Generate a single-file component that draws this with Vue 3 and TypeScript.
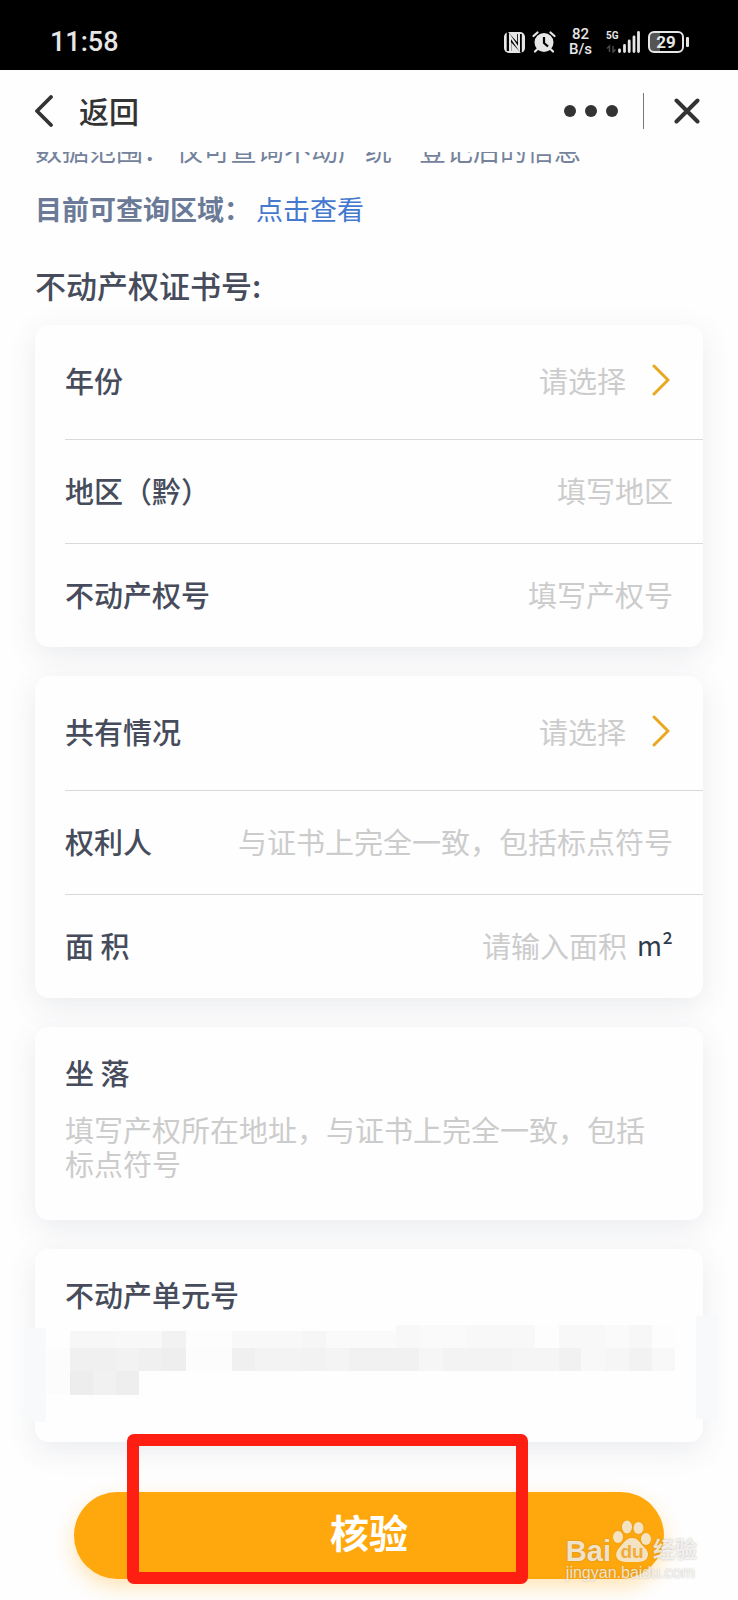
<script setup lang="ts">
import { ref } from 'vue'

interface Field {
  id: string
  label: string
  placeholder: string
  kind: 'select' | 'text'
  unit?: boolean
}

const groups: Field[][] = [
  [
    { id: 'year', label: '年份', placeholder: '请选择', kind: 'select' },
    { id: 'region', label: '地区（黔）', placeholder: '填写地区', kind: 'text' },
    { id: 'cert', label: '不动产权号', placeholder: '填写产权号', kind: 'text' },
  ],
  [
    { id: 'share', label: '共有情况', placeholder: '请选择', kind: 'select' },
    { id: 'owner', label: '权利人', placeholder: '与证书上完全一致，包括标点符号', kind: 'text' },
    { id: 'area', label: '面 积', placeholder: '请输入面积', kind: 'text', unit: true },
  ],
]

const address = ref('')

interface Cell {
  x: number
  y: number
  w: number
  h: number
  c: string
}

const cells: Cell[] = [
  { x: 35, y: 82, w: 46, h: 17, c: '#f7f7f7' },
  { x: 81, y: 82, w: 46, h: 17, c: '#f8f8f8' },
  { x: 127, y: 82, w: 24, h: 17, c: '#f2f2f2' },
  { x: 151, y: 82, w: 46, h: 17, c: '#fdfdfd' },
  { x: 197, y: 82, w: 70, h: 17, c: '#f8f8f8' },
  { x: 267, y: 82, w: 24, h: 17, c: '#f6f6f6' },
  { x: 291, y: 82, w: 70, h: 17, c: '#fafafa' },
  { x: 361, y: 76, w: 24, h: 23, c: '#f8f8f8' },
  { x: 385, y: 76, w: 46, h: 23, c: '#fafafa' },
  { x: 431, y: 76, w: 69, h: 23, c: '#f8f8f8' },
  { x: 500, y: 76, w: 24, h: 23, c: '#fdfdfd' },
  { x: 524, y: 76, w: 46, h: 23, c: '#f8f8f8' },
  { x: 570, y: 76, w: 24, h: 23, c: '#fafafa' },
  { x: 594, y: 76, w: 23, h: 23, c: '#f7f7f7' },
  { x: 617, y: 76, w: 23, h: 23, c: '#fdfdfd' },
  { x: 12, y: 99, w: 23, h: 46, c: '#fcfcfc' },
  { x: 35, y: 99, w: 46, h: 23, c: '#f0f0f0' },
  { x: 81, y: 99, w: 23, h: 23, c: '#f2f2f2' },
  { x: 104, y: 99, w: 23, h: 23, c: '#f0f0f0' },
  { x: 127, y: 99, w: 24, h: 23, c: '#eeeeee' },
  { x: 151, y: 99, w: 46, h: 23, c: '#fcfcfc' },
  { x: 197, y: 99, w: 23, h: 23, c: '#f0f0f0' },
  { x: 220, y: 99, w: 47, h: 23, c: '#f3f3f3' },
  { x: 267, y: 99, w: 24, h: 23, c: '#f2f2f2' },
  { x: 291, y: 99, w: 23, h: 23, c: '#f4f4f4' },
  { x: 314, y: 99, w: 70, h: 23, c: '#f1f1f1' },
  { x: 384, y: 99, w: 24, h: 23, c: '#f6f6f6' },
  { x: 408, y: 99, w: 69, h: 23, c: '#f3f3f3' },
  { x: 477, y: 99, w: 47, h: 23, c: '#f5f5f5' },
  { x: 524, y: 99, w: 22, h: 23, c: '#f1f1f1' },
  { x: 546, y: 99, w: 24, h: 23, c: '#f8f8f8' },
  { x: 570, y: 99, w: 24, h: 23, c: '#f6f6f6' },
  { x: 594, y: 99, w: 23, h: 23, c: '#f2f2f2' },
  { x: 617, y: 99, w: 23, h: 23, c: '#f8f8f8' },
  { x: 35, y: 122, w: 23, h: 24, c: '#ededed' },
  { x: 58, y: 122, w: 23, h: 24, c: '#f1f1f1' },
  { x: 81, y: 122, w: 23, h: 24, c: '#eeeeee' },
]
</script>

<template>
  <div class="page">
    <header class="top">
      <div class="status">
        <span class="clock">11:58</span>
        <div class="indicators">
          <svg class="nfc" viewBox="0 0 21 21" width="21" height="21" aria-hidden="true">
            <rect x="0" y="0" width="21" height="21" rx="5" fill="#e6e6e6" />
            <path d="M5 19V4.500L15.500 16V2" fill="none" stroke="#000" stroke-width="4.600" />
            <path d="M6 20V4l9 13V1" fill="none" stroke="#e6e6e6" stroke-width="2" />
          </svg>
          <svg class="alarm" viewBox="0 0 24 22" width="24" height="22" aria-hidden="true">
            <circle cx="12" cy="11.5" r="9.5" fill="#e6e6e6" />
            <path d="M1.5 5 5.5 1.5M22.500 5l-4-3.500M5 18.500l-2 2M19 18.500l2 2" stroke="#e6e6e6" stroke-width="2.200" stroke-linecap="round" />
            <path d="M12 6v6l4 3.500" fill="none" stroke="#000" stroke-width="2.200" />
          </svg>
          <span class="speed"><span>82</span><span>B/s</span></span>
          <span class="network">
            <svg viewBox="0 0 34 22" width="34" height="22" aria-hidden="true">
              <path d="M3.500 21v-6l-2.500 2.500M7 15v6l2.500-2.500" fill="none" stroke="#4a4a4a" stroke-width="1.500" />
              <path d="M13.500 20.500v-1.500M18.500 20.500v-6M23.200 20.500V10M28 20.500V6M32.500 20.500V1.500" stroke="#e6e6e6" stroke-width="2.800" stroke-linecap="round" />
            </svg>
            <span class="gen">5G</span>
          </span>
          <span class="battery"><span class="cell">29</span></span>
        </div>
      </div>
      <nav class="nav">
        <button class="back" type="button">
          <svg viewBox="0 0 20 32" width="20" height="32" aria-hidden="true">
            <path d="M17 2 3 16l14 14" fill="none" stroke="#333" stroke-width="3.800" stroke-linecap="round" stroke-linejoin="round" />
          </svg>
          <span>返回</span>
        </button>
        <div class="tools">
          <button type="button" aria-label="更多">
            <svg viewBox="0 0 54 12" width="54" height="12" aria-hidden="true">
              <circle cx="6" cy="6" r="6" fill="#333" /><circle cx="27" cy="6" r="6" fill="#333" /><circle cx="48" cy="6" r="6" fill="#333" />
            </svg>
          </button>
          <i class="bar"></i>
          <button type="button" aria-label="关闭">
            <svg viewBox="0 0 26 26" width="26" height="26" aria-hidden="true">
              <path d="M2.500 2.500l21 21M23.500 2.500l-21 21" stroke="#333" stroke-width="4" stroke-linecap="round" />
            </svg>
          </button>
        </div>
      </nav>
    </header>

    <main class="content">
      <div class="scrolled"><p>数据范围： 仅可查询不动产统一登记后的信息</p></div>
      <p class="area"><b>目前可查询区域：</b><a href="#">点击查看</a></p>
      <h1>不动产权证书号:</h1>

      <form @submit.prevent>
        <section v-for="(group, g) in groups" :key="g" class="card">
          <div v-for="f in group" :key="f.id" class="row" :class="f.kind">
            <label :for="f.id">{{ f.label }}</label>
            <template v-if="f.kind === 'select'">
              <select :id="f.id"><option value="">{{ f.placeholder }}</option></select>
              <svg class="chev" viewBox="0 0 18 32" width="18" height="32" aria-hidden="true">
                <path d="M2 2 16 16 2 30" fill="none" stroke="#e9a820" stroke-width="3" stroke-linecap="round" stroke-linejoin="round" />
              </svg>
            </template>
            <input v-else :id="f.id" type="text" :placeholder="f.placeholder" />
            <span v-if="f.unit" class="unit">m²</span>
          </div>
        </section>

        <section class="card block">
          <label for="address">坐 落</label>
          <textarea id="address" v-model="address" rows="2" placeholder="填写产权所在地址，与证书上完全一致，包括标点符号"></textarea>
        </section>

        <section class="card block">
          <label for="unit-no">不动产单元号</label>
          <textarea id="unit-no" rows="2"></textarea>
          <svg class="mosaic" viewBox="0 0 668 193" preserveAspectRatio="none" aria-hidden="true">
            <defs>
              <linearGradient id="edge">
                <stop offset="0" stop-color="#f8f9fb" stop-opacity="0" />
                <stop offset="0.5" stop-color="#f8f9fb" />
                <stop offset="1" stop-color="#f8f9fb" />
              </linearGradient>
            </defs>
            <rect x="-14" y="79" width="25" height="94" fill="url(#edge)" />
            <rect x="661" y="67" width="22" height="103" fill="#f8f9fb" />
            <rect v-for="(c, i) in cells" :key="i" :x="c.x" :y="c.y" :width="c.w" :height="c.h" :fill="c.c" />
          </svg>
        </section>

        <div class="action">
          <button class="submit" type="submit">核验</button>
          <div class="frame"></div>
          <div class="mark">
            <div class="brand">
              <span class="latin">Bai</span>
              <svg viewBox="0 0 38 42" width="38" height="42" aria-hidden="true">
                <g class="paw">
                  <ellipse cx="5" cy="17" rx="5" ry="6" />
                  <ellipse cx="14" cy="7" rx="5" ry="6.500" />
                  <ellipse cx="25.500" cy="8" rx="5" ry="6" />
                  <ellipse cx="33" cy="19" rx="5" ry="6" />
                  <path d="M19 18c6 0 8 5 12 9s5 7 3 11-7 4-15 4-13 0-15-4 0-8 3-11 6-9 12-9z" />
                </g>
                <text x="19" y="38" text-anchor="middle">du</text>
              </svg>
              <span class="han">经验</span>
            </div>
            <div class="site">jingyan.baidu.com</div>
          </div>
        </div>
      </form>
    </main>
  </div>
</template>

<style>
body {
  margin: 0;
  background: #fefefe;
}
</style>

<style scoped>
.page {
  font-family: "Noto Sans CJK SC", "Liberation Sans", sans-serif;
  font-size: 29px;
  color: #464c5b;
  overflow: hidden;
}
p, h1 { margin: 0; }
button {
  border: 0;
  padding: 0;
  background: none;
  font: inherit;
  color: inherit;
  display: flex;
  align-items: center;
}
.status {
  height: 70px;
  box-sizing: border-box;
  padding: 14px 49px 0 50px;
  background: #000;
  color: #e6e6e6;
  display: flex;
  align-items: center;
  justify-content: space-between;
  font-family: Roboto, "Noto Sans", sans-serif;
}
.clock { font-size: 27px; line-height: 28px; font-weight: 500; }
.indicators { display: flex; align-items: center; }
.alarm { margin-left: 7px; }
.speed {
  margin-left: 13px;
  display: flex;
  flex-direction: column;
  align-items: center;
  font-size: 15px;
  line-height: 15px;
  font-weight: 500;
}
.speed span { height: 15px; }
.network { margin-left: 14px; position: relative; display: flex; }
.gen {
  position: absolute;
  left: 0;
  top: 0;
  font-size: 10px;
  line-height: 10px;
  font-weight: 700;
}
.battery {
  margin-left: 8px;
  display: flex;
  align-items: center;
}
.battery::after {
  content: "";
  width: 3px;
  height: 10px;
  margin-left: 2px;
  border-radius: 1px;
  background: #e6e6e6;
}
.cell {
  width: 32px;
  height: 18px;
  border: 2px solid #e6e6e6;
  border-radius: 6px;
  background: linear-gradient(90deg, #555 30%, #000 30%);
  font-size: 17px;
  line-height: 18px;
  font-weight: 700;
  text-align: center;
}
.nav {
  height: 82px;
  padding: 0 38px 0 34px;
  display: flex;
  align-items: center;
  justify-content: space-between;
  color: #333;
}
.back { gap: 25px; font-size: 30px; line-height: 40px; font-weight: 500; }
.back span { padding-bottom: 3px; }
.tools { display: flex; align-items: center; }
.bar { width: 1px; height: 36px; margin: 0 30px 0 25px; background: #777; }
.content { padding: 0 35px; }
.scrolled {
  height: 16px;
  overflow: hidden;
  display: flex;
  align-items: flex-end;
  font-size: 27px;
  line-height: 36px;
  color: #74829b;
  white-space: nowrap;
}
.area {
  margin-top: 21px;
  display: flex;
  gap: 5px;
  font-size: 27px;
  line-height: 40px;
  color: #6b7a97;
}
.area a { color: #4479cd; text-decoration: none; }
h1 {
  margin-top: 33px;
  font-size: 31px;
  line-height: 46px;
  font-weight: 500;
}
.card {
  position: relative;
  margin-top: 29px;
  padding-left: 30px;
  border-radius: 14px;
  background: #fefefe;
  box-shadow: 0 8px 30px rgba(70, 85, 110, 0.11);
}
.card:first-of-type { margin-top: 17px; }
.row {
  min-height: 99px;
  padding: 0 30px 4px 0;
  display: flex;
  align-items: center;
}
.row + .row { border-top: 1px solid #d9d9db; }
.row.select { min-height: 110px; padding-right: 33px; }
label { white-space: nowrap; font-weight: 500; }
select, input, textarea {
  border: 0;
  padding: 0;
  background: none;
  font: inherit;
  color: #ccc;
  outline: none;
  font-weight: 400;
}
select {
  appearance: none;
  margin-left: auto;
  text-align: right;
  text-align-last: right;
}
input { flex: 1; min-width: 0; text-align: right; }
::placeholder { color: #ccc; opacity: 1; }
.chev { margin-left: 26px; }
.unit { margin-left: 10px; font-size: 27px; color: #2f3b4b; }
.block {
  padding: 23px 30px 24px;
  display: flex;
  flex-direction: column;
}
.block label { line-height: 44px; }
textarea {
  margin-top: 18px;
  height: 84px;
  line-height: 34px;
  resize: none;
}
.mosaic {
  position: absolute;
  inset: 0;
  width: 100%;
  height: 100%;
  overflow: visible;
}
.action { position: relative; margin-top: 50px; padding: 0 39px 21px; }
.submit {
  width: 100%;
  height: 87px;
  padding-bottom: 10px;
  justify-content: center;
  border-radius: 44px;
  background: #ffa80d;
  color: #fff;
  font-size: 39px;
  font-weight: 700;
  box-shadow: 0 8px 20px rgba(255, 168, 13, 0.3);
}
.frame {
  position: absolute;
  left: 92px;
  top: -58px;
  width: 60%;
  height: 150px;
  box-sizing: border-box;
  border: 12px solid #ff1e12;
  border-radius: 7px;
  pointer-events: none;
}
.mark {
  position: absolute;
  right: 6px;
  top: 28px;
  color: rgba(255, 255, 255, 0.75);
  font-family: "Liberation Sans", "Noto Sans CJK SC", sans-serif;
  text-shadow: 0 0 2px rgba(120, 110, 100, 0.5);
}
.brand { display: flex; align-items: flex-end; gap: 2px; }
.latin { font-size: 29px; line-height: 30px; font-weight: 700; margin-bottom: -4px; }
.han { font-size: 22px; line-height: 24px; font-weight: 700; }
.paw {
  fill: rgba(255, 255, 255, 0.72);
  filter: drop-shadow(0 0 1px rgba(120, 110, 100, 0.4));
}
.brand text { font-size: 19px; font-weight: 700; fill: #f0ab3c; text-shadow: none; }
.site { font-size: 16px; line-height: 22px; }
</style>
